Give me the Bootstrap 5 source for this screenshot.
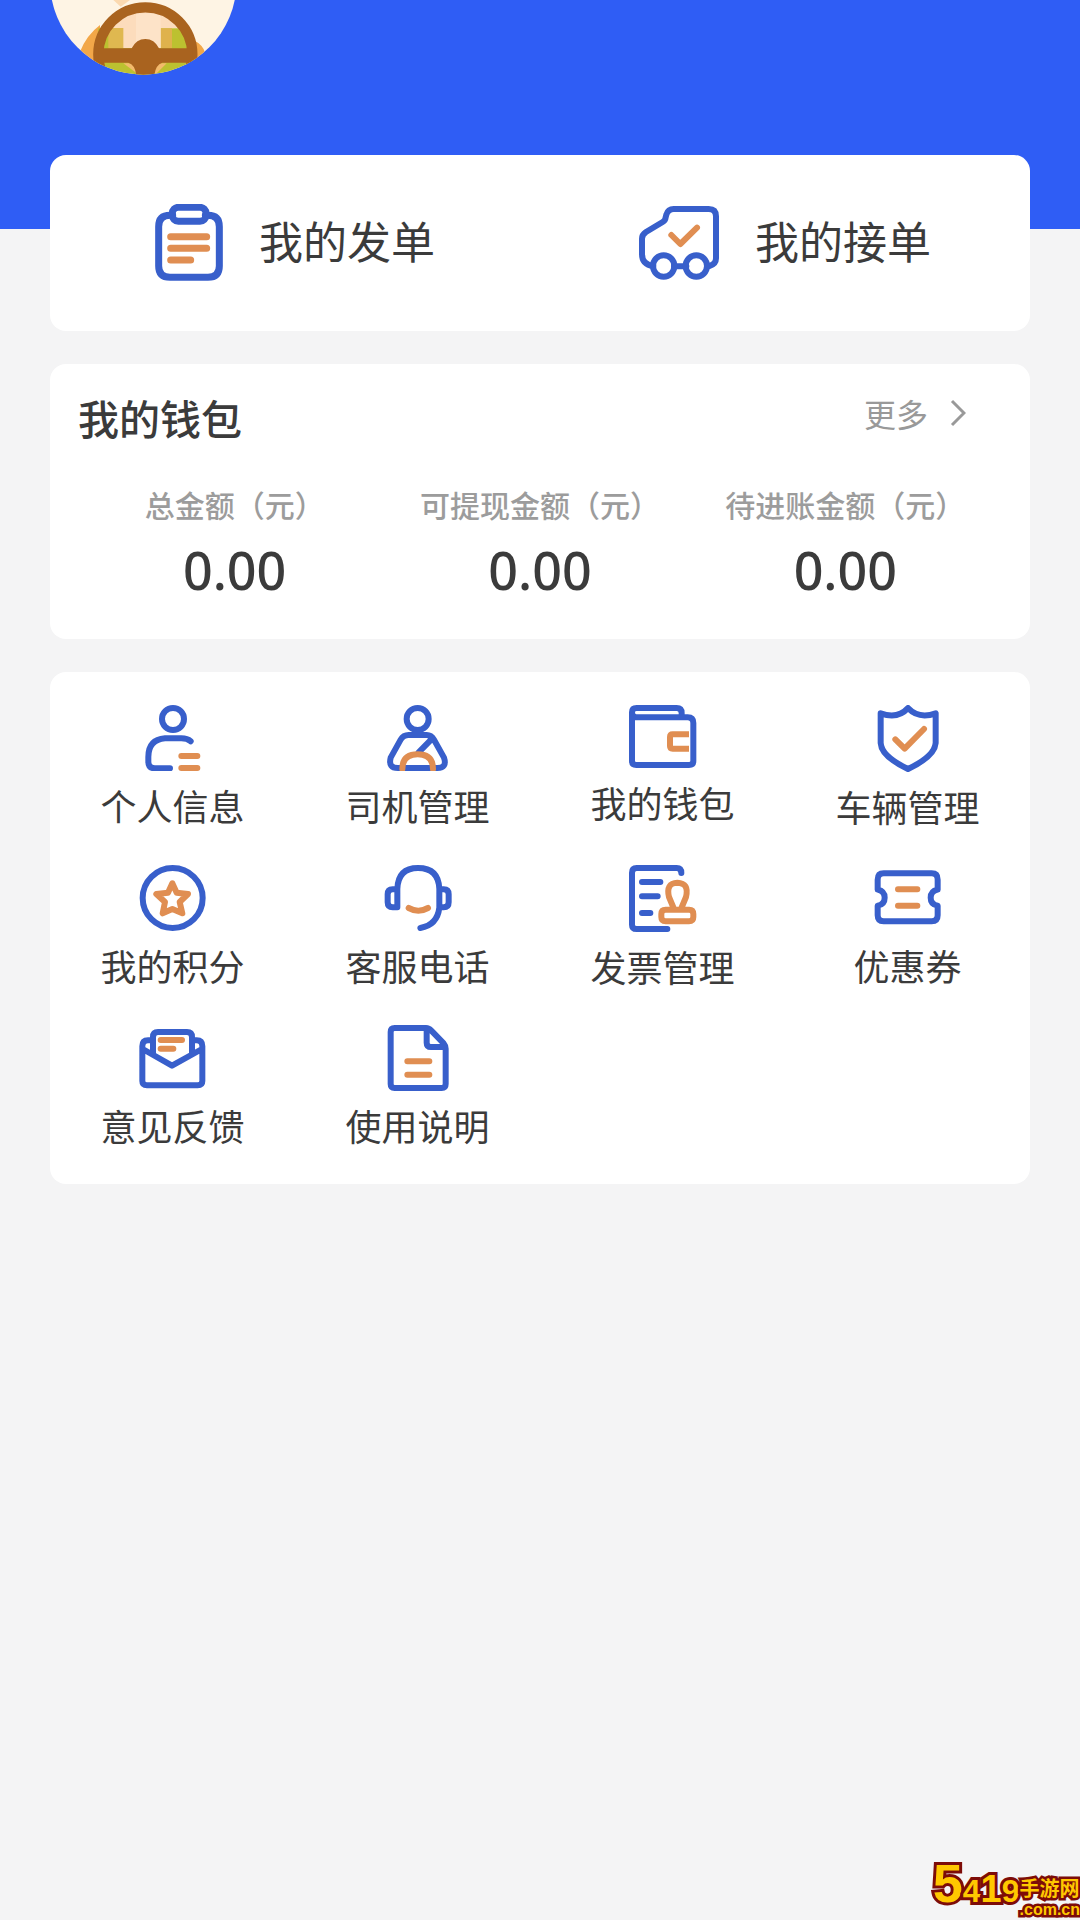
<!DOCTYPE html>
<html lang="zh-CN">
<head>
<meta charset="utf-8">
<meta name="viewport" content="width=device-width, initial-scale=1">
<title>我的</title>
<link href="https://cdn.jsdelivr.net/npm/bootstrap@5.3.0/dist/css/bootstrap.min.css" rel="stylesheet">
<style>
  body {
    background: #f4f4f5;
    color: #3b3b3b;
    font-family: "Noto Sans CJK SC", sans-serif;
    min-height: 100vh;
  }
  a { color: inherit; text-decoration: none; }
  .profile-head { background: #2f5df5; height: 229px; padding-left: 49px; }
  .page-main { padding: 0 50px; margin-top: -74px; gap: 33px; }
  .panel { background: #fff; border-radius: 16px; }
  .order-panel { height: 176px; }
  .order-link { gap: 36px; font-size: 44px; line-height: 64px; }
  .order-link span { padding-bottom: 6px; }
  .wallet-panel { padding: 22px 28px 34px; }
  .wallet-title { font-size: 41px; line-height: 62px; font-weight: 500; }
  .more-link { font-size: 32px; line-height: 54px; color: #999; gap: 22px; margin-right: 36px; }
  .amount-row { padding: 0 4px; }
  .amount-label { font-size: 30px; line-height: 44px; font-weight: 500; color: #9c9c9c; margin-top: 34px; }
  .amount-value { font-family: "Noto Sans", sans-serif; font-size: 52px; line-height: 70px; font-weight: 500; margin-top: 9px; }
  .menu-panel { padding: 33px 0; }
  .menu-rows { row-gap: 33px; }
  .menu-label { font-size: 36px; line-height: 52px; margin-top: 8px; }
  .line-icon { display: block; flex: none; fill: none; stroke: #385fcb; stroke-width: 18; stroke-linecap: round; stroke-linejoin: round; }
  .line-icon .hot { stroke: #e08e52; }
  .icon-bold { stroke-width: 21; }
  .site-mark { right: 0; bottom: 0; color: #ffc800; font-weight: 700; font-family: "Liberation Sans", "Noto Sans CJK SC", sans-serif; -webkit-text-stroke: 6px #7d0c08; paint-order: stroke fill; }
  .mark-digits { font-size: 32px; line-height: 58px; }
  .mark-five { font-size: 54px; }
  .mark-one { font-size: 38px; }
  .mark-side { -webkit-text-stroke-width: 5px; }
  .mark-name { font-size: 20px; line-height: 22px; }
  .mark-host { font-size: 16px; line-height: 20px; }
</style>
</head>
<body class="position-relative">
<header class="profile-head">
  <svg class="d-block" width="190" height="75" viewBox="57 0 570 225" role="img" aria-label="头像">
    <defs><clipPath id="face"><circle cx="340" cy="-56" r="280"/></clipPath></defs>
    <g clip-path="url(#face)">
      <rect x="57" y="0" width="570" height="225" fill="#fef4e4"/>
      <path d="M250 0h50l-28 20z" fill="#fbd9b0"/>
      <path d="M150 155q20-50 60-80v120h-60zM490 120q30 15 36 40l-30 30z" fill="#f2a748"/>
      <path d="M205 85h260l30 70v70H190z" fill="#bcc130"/>
      <path d="M235 75h60v70h-60z" fill="#dfb850"/>
      <path d="M392 85h34v60h-34z" fill="#dfb24c"/>
      <path d="M240 84q40-60 110-60t100 60h-58v60H280V84z" fill="#fcdcbc"/>
      <path d="M318 40h74v105h-74z" fill="#fde3c8"/>
      <path d="M280 190h130l-30 30h-60z" fill="#f3ba6c"/>
      <circle cx="346" cy="163" r="141" fill="none" stroke="#a9631f" stroke-width="31"/>
      <path d="M205 145h100q14-28 41-28t41 28h100v43h-90q-20 6-24 37h-54q-4-31-24-37h-90z" fill="#a9631f"/>
    </g>
  </svg>
</header>

<main class="page-main d-flex flex-column">
  <nav class="panel order-panel row g-0 align-items-center" aria-label="订单">
    <div class="col-6">
      <a href="#" class="order-link d-flex justify-content-center align-items-center">
        <svg class="line-icon icon-bold" width="68" height="78" viewBox="345 192 204 234">
          <path d="M398 226h-8q-34 0-34 34v118q0 34 34 34h114q34 0 34-34V260q0-34-34-34h-8"/>
          <rect x="397" y="202" width="101" height="42" rx="18"/>
          <path class="hot" d="M392 290h108M392 325h108M392 360h60"/>
        </svg>
        <span>我的发单</span>
      </a>
    </div>
    <div class="col-6">
      <a href="#" class="order-link d-flex justify-content-center align-items-center">
        <svg class="line-icon" width="80" height="78" viewBox="297 192 240 234">
          <path d="M340 378q-34-4-34-36v-46q0-12 12-20l50-30q8-5 9-14l2-8q5-17 22-17h105q22 0 22 22v126q0 18-20 23M402 379h37"/>
          <circle cx="371" cy="378" r="32"/><circle cx="469" cy="378" r="32"/>
          <path class="hot" d="M394 285l27 27 50-49"/>
        </svg>
        <span>我的接单</span>
      </a>
    </div>
  </nav>

  <section class="panel wallet-panel">
    <div class="d-flex justify-content-between align-items-start">
      <h1 class="wallet-title m-0">我的钱包</h1>
      <a href="#" class="more-link d-flex align-items-center">更多
        <svg width="16" height="28" viewBox="0 0 16 28" fill="none" stroke="#999" stroke-width="3"><path d="M2 2l12 12L2 26"/></svg>
      </a>
    </div>
    <div class="amount-row row g-0 text-center text-nowrap">
      <div class="col-4"><div class="amount-label">总金额（元）</div><div class="amount-value">0.00</div></div>
      <div class="col-4"><div class="amount-label">可提现金额（元）</div><div class="amount-value">0.00</div></div>
      <div class="col-4"><div class="amount-label">待进账金额（元）</div><div class="amount-value">0.00</div></div>
    </div>
  </section>

  <nav class="panel menu-panel" aria-label="功能">
    <div class="menu-rows row g-0 text-center text-nowrap">
      <div class="col-3"><a href="#" class="d-flex flex-column align-items-center">
        <svg class="line-icon" width="68" height="66" viewBox="176 44 204 198">
          <circle cx="278" cy="86" r="33"/>
          <path d="M331 153q-10-9-28-9h-49q-50 4-50 56v14q0 20 20 20h45"/>
          <path class="hot" d="M303 197h48M303 233h48"/>
        </svg><span class="menu-label">个人信息</span></a></div>
      <div class="col-3"><a href="#" class="d-flex flex-column align-items-center">
        <svg class="line-icon" width="68" height="66" viewBox="910 44 204 198">
          <circle cx="1011" cy="86" r="33"/>
          <path d="M984 134h54q14 0 22 14l30 54q10 31-20 31H952q-30 0-22-31l30-54q8-14 24-14zM1055 144l-41 42"/>
          <path class="hot" d="M965 236q0-44 46-44t46 44"/>
        </svg><span class="menu-label">司机管理</span></a></div>
      <div class="col-3"><a href="#" class="d-flex flex-column align-items-center">
        <svg class="line-icon" width="68" height="63" viewBox="206 44 204 189">
          <path d="M215 66q0-13 14-13h120q15 0 15 15v13M215 66v146q0 12 13 12h158q13 0 13-12V98q0-17-17-17H228q-13 0-13-15"/>
          <path class="hot" stroke-linecap="butt" d="M386 132h-49q-8 0-8 8v27q0 8 8 8h49"/>
        </svg><span class="menu-label">我的钱包</span></a></div>
      <div class="col-3"><a href="#" class="d-flex flex-column align-items-center">
        <svg class="line-icon" width="68" height="67" viewBox="940 44 204 201">
          <path d="M960 69q52 18 82-16 32 34 83 16v89q-3 40-83 78-80-38-82-78z"/>
          <path class="hot" d="M1004 147l28 28 58-59"/>
        </svg><span class="menu-label">车辆管理</span></a></div>

      <div class="col-3"><a href="#" class="d-flex flex-column align-items-center">
        <svg class="line-icon" width="68" height="66" viewBox="176 44 204 198">
          <circle cx="277" cy="143" r="90"/>
          <path class="hot" d="M276 99l13 28 34 4-25 24 8 34-30-13-29 13 7-34-26-24 35-4z"/>
        </svg><span class="menu-label">我的积分</span></a></div>
      <div class="col-3"><a href="#" class="d-flex flex-column align-items-center">
        <svg class="line-icon" width="68" height="66" viewBox="910 44 204 198">
          <path d="M950 117h-14q-15 0-15 15v24q0 15 15 15h14zM950 116q2-63 62-63 62 0 64 63v56q-6 52-57 61M1076 117h13q15 0 15 15v24q0 15-15 15h-13"/>
          <path class="hot" d="M984 173q29 16 58 0"/>
        </svg><span class="menu-label">客服电话</span></a></div>
      <div class="col-3"><a href="#" class="d-flex flex-column align-items-center">
        <svg class="line-icon" width="68" height="67" viewBox="206 44 204 201">
          <path d="M363 68q0-15-14-15H229q-14 0-14 14v156q0 13 14 13h92M245 95h55M245 138h47M245 188h25"/>
          <path class="hot" d="M341 176l-15-36q-10-42 25-43 36 1 26 43l-15 36M316 178h70q13 0 13 13v9q0 13-13 13h-70q-13 0-13-13v-9q0-13 13-13z"/>
        </svg><span class="menu-label">发票管理</span></a></div>
      <div class="col-3"><a href="#" class="d-flex flex-column align-items-center">
        <svg class="line-icon" width="68" height="66" viewBox="940 44 204 198">
          <path d="M969 69h144q18 0 18 19v30q-21 4-21 24t21 24v29q0 18-18 18H969q-18 0-18-18v-29q21-4 21-24t-21-24V88q0-19 18-19z"/>
          <path class="hot" d="M1012 117h58M1012 166h58"/>
        </svg><span class="menu-label">优惠券</span></a></div>

      <div class="col-3"><a href="#" class="d-flex flex-column align-items-center">
        <svg class="line-icon" width="68" height="66" viewBox="176 44 204 198">
          <path d="M218 90h-15q-17 0-17 18v104q0 13 14 13h152q14 0 14-13V108q0-18-17-18h-12M187 116l88 50 90-50M218 130V80q0-15 15-15h87q15 0 15 15v50"/>
          <path class="hot" d="M241 89h64M241 115h38"/>
        </svg><span class="menu-label">意见反馈</span></a></div>
      <div class="col-3"><a href="#" class="d-flex flex-column align-items-center">
        <svg class="line-icon" width="68" height="66" viewBox="910 44 204 198">
          <path d="M942 53h94q9 0 16 8l37 38q6 7 6 16v106q0 12-12 12H942q-12 0-12-12V65q0-12 12-12zM1038 55v42q0 13 13 13h42"/>
          <path class="hot" d="M980 153h66M980 193h66"/>
        </svg><span class="menu-label">使用说明</span></a></div>
    </div>
  </nav>
</main>

<aside class="site-mark position-absolute d-flex align-items-end text-nowrap">
  <span class="mark-digits"><span class="mark-five">5</span>4<span class="mark-one">1</span>9</span>
  <span class="mark-side d-flex flex-column"><span class="mark-name">手游网</span><span class="mark-host">.com.cn</span></span>
</aside>
<script src="https://cdn.jsdelivr.net/npm/bootstrap@5.3.0/dist/js/bootstrap.bundle.min.js"></script>
</body>
</html>
